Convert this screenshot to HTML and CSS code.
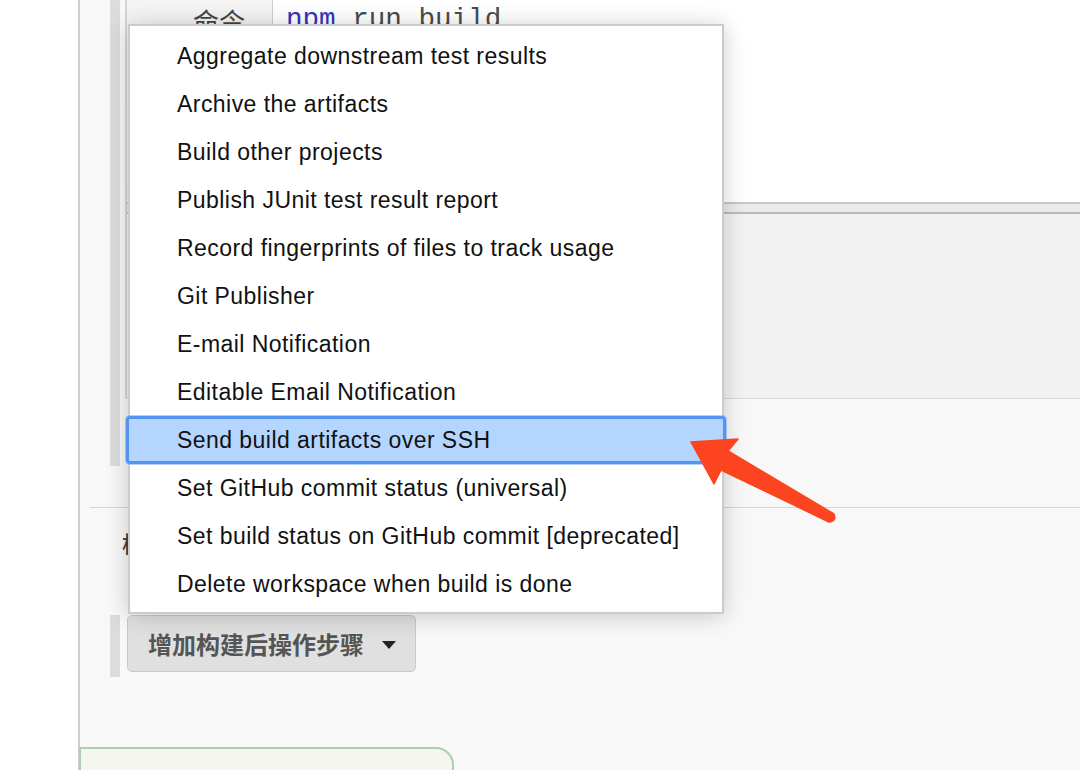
FILE: index.html
```html
<!DOCTYPE html>
<html lang="zh">
<head>
<meta charset="utf-8">
<title>Jenkins 构建后操作</title>
<link rel="stylesheet" href="styles.css">
</head>
<body>
<div class="page">
  <div class="gutter"></div>
  <div class="main">
    <div class="build-section">
      <div class="sbar"></div>
      <div class="sbody">
        <div class="chunk">
          <div class="cmd-row">
            <div class="cmd-label">命令</div>
            <div class="cmd-editor"><span class="kw">npm</span> run build</div>
          </div>
          <div class="editor-bottom"></div>
        </div>
      </div>
    </div>
    <div class="divider"></div>
    <div class="heading">构建后操作</div>
    <div class="post-row">
      <div class="sbar short"></div>
      <button class="add-btn">增加构建后操作步骤<span class="caret"></span></button>
    </div>
    <div class="green-box"></div>
  </div>

  <ul class="menu">
    <li>Aggregate downstream test results</li>
    <li>Archive the artifacts</li>
    <li>Build other projects</li>
    <li>Publish JUnit test result report</li>
    <li>Record fingerprints of files to track usage</li>
    <li>Git Publisher</li>
    <li>E-mail Notification</li>
    <li>Editable Email Notification</li>
    <li class="active">Send build artifacts over SSH</li>
    <li>Set GitHub commit status (universal)</li>
    <li>Set build status on GitHub commit [deprecated]</li>
    <li>Delete workspace when build is done</li>
  </ul>

  <svg class="arrow" width="1080" height="770" viewBox="0 0 1080 770">
    <path d="M691 442 L738 439 L728 451 L834 514 Q837 521 829 522 L721 470 L714 484 Z" fill="#fc4420" stroke="#fc4420" stroke-width="1.5" stroke-linejoin="round"/>
  </svg>
</div>
</body>
</html>
```
FILE: styles.css
```css
* { box-sizing: border-box; }
html, body { margin: 0; padding: 0; }
body {
  width: 1080px;
  height: 770px;
  overflow: hidden;
  background: #fff;
  font-family: "Liberation Sans", "Noto Sans CJK SC", sans-serif;
}
.page {
  position: relative;
  display: flex;
  width: 1080px;
  height: 770px;
}
.gutter {
  width: 78px;
  background: #fff;
}
.main {
  flex: 1;
  border-left: 2px solid #cdcdcd;
  background: #f8f8f8;
  display: flex;
  flex-direction: column;
}
.main > * { flex-shrink: 0; }
.build-section {
  display: flex;
  height: 466px;
}
.sbar {
  margin-left: 30px;
  width: 10px;
  background: #dcdcdc;
}
.sbody {
  flex: 1;
  margin-left: 5px;
}
.chunk {
  height: 399px;
  background: #f2f2f2;
  border-left: 2px solid #d6d6d6;
  border-bottom: 1px solid #d8d8d8;
}
.cmd-row {
  display: flex;
  height: 202px;
}
.cmd-label {
  width: 146px;
  background: linear-gradient(#f4f4f4, #ececec);
  border-right: 1px solid #cfcfcf;
  text-align: right;
  padding: 5px 27px 0 0;
  font-family: "Noto Sans CJK SC", sans-serif;
  font-size: 26px;
  line-height: 32px;
  color: #444;
}
.cmd-editor {
  flex: 1;
  background: #fff;
  padding: 4px 0 0 13px;
  font-family: "Liberation Mono", monospace;
  font-size: 27.6px;
  line-height: 32px;
  color: #4a4a4a;
}
.cmd-editor .kw { color: #3434b8; }
.editor-bottom {
  height: 12px;
  border-top: 2px solid #c8c8c8;
  background: #ebebeb;
  border-bottom: 2px solid #bcbcb4;
}
.divider {
  margin: 41px 0 0 10px;
  border-top: 1px solid #d6d6d6;
}
.heading {
  margin: 19px 0 0 42px;
  height: 30px;
  line-height: 30px;
  font-family: "Noto Sans CJK SC", sans-serif;
  font-weight: 500;
  font-size: 22px;
  color: #444;
}
.post-row {
  display: flex;
  margin-top: 58px;
  height: 62px;
  align-items: flex-start;
}
.sbar.short {
  height: 62px;
}
.add-btn {
  margin-left: 7px;
  height: 57px;
  width: 289px;
  display: flex;
  align-items: center;
  padding: 0 0 0 20px;
  background: #e0e0e0;
  border: 1px solid #c9c9c9;
  border-radius: 5px;
  font-family: "Noto Sans CJK SC", sans-serif;
  font-weight: 700;
  font-size: 24px;
  color: #555;
}
.caret {
  margin: 3px 0 0 18px;
  width: 0;
  height: 0;
  border-left: 7.5px solid transparent;
  border-right: 7.5px solid transparent;
  border-top: 8px solid #222;
}
.green-box {
  margin: 70px 0 0 -1px;
  width: 375px;
  height: 40px;
  background: #f5f7ee;
  border: 2px solid #a9cfb5;
  border-radius: 0 18px 0 0;
}
.menu {
  position: absolute;
  left: 128px;
  top: 24px;
  width: 596px;
  margin: 0;
  padding: 6px 0 4px;
  list-style: none;
  background: #fff;
  border: 2px solid #cbcbcb;
  box-shadow: 0 2px 22px rgba(0, 0, 0, 0.2);
}
.menu li {
  height: 48px;
  line-height: 48px;
  padding-left: 47px;
  font-size: 23px;
  letter-spacing: 0.45px;
  color: #111;
  white-space: nowrap;
}
.menu li.active {
  margin: 0 -4px 0 -4px;
  padding-left: 51px;
  background: #b4d5fe;
  border-radius: 4px;
  box-shadow: inset 0 0 0 3px #5294f2, 0 0 0 1px rgba(90, 150, 245, 0.45);
}
.arrow {
  position: absolute;
  left: 0;
  top: 0;
  pointer-events: none;
}
```
